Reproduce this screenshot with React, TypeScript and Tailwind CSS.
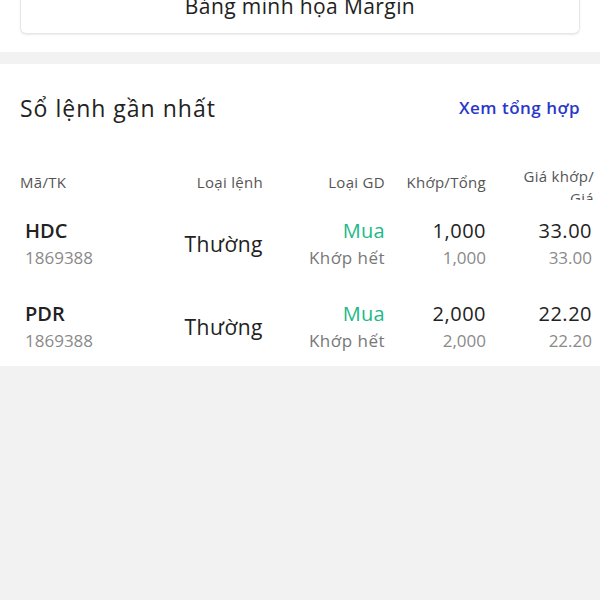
const orders = [
  { code: "HDC", account: "1869388", type: "Thường", side: "Mua", status: "Khớp hết", matched: "1,000", total: "1,000", price: "33.00", orderPrice: "33.00" },
  { code: "PDR", account: "1869388", type: "Thường", side: "Mua", status: "Khớp hết", matched: "2,000", total: "2,000", price: "22.20", orderPrice: "22.20" },
];

export default function App() {
  return (
    <div className="w-[600px] h-[600px] overflow-hidden bg-[#f2f2f2] flex flex-col font-['Open_Sans',sans-serif] text-[#222]">
      {/* margin illustration button, cut at top */}
      <div className="h-[52px] bg-white">
        <div className="mx-[20px] h-[34px] overflow-hidden rounded-b-[6px] border border-t-0 border-[#e6e6e6] shadow-[0_1px_2px_rgba(0,0,0,0.08)] flex items-end justify-center pb-[16px]">
          <span className="text-[21px] leading-[21px] tracking-[0.4px] text-[#222]">Bảng minh họa Margin</span>
        </div>
      </div>

      <div className="h-[12px]" />

      <div className="bg-white pl-[20px] pr-[6px]">
        <div className="flex items-center justify-between pt-[16px] pr-[14px] h-[72px]">
          <h2 className="text-[23px] leading-[28px] tracking-[1px]">Sổ lệnh gần nhất</h2>
          <a className="text-[17px] leading-[24px] tracking-[0.5px] font-semibold text-[#2a38c9]">Xem tổng hợp</a>
        </div>

        <div className="h-[64px] pt-[29px]">
          <div className="h-[35px] overflow-hidden flex items-center text-[15px] tracking-[0.3px] text-[#555]">
            <div className="flex-1">Mã/TK</div>
            <div className="w-[110px] text-right">Loại lệnh</div>
            <div className="w-[122px] text-right">Loại GD</div>
            <div className="w-[101px] text-right">Khớp/Tổng</div>
            <div className="w-[108px] self-start flex justify-end">
              <div className="w-[78px] text-right leading-[22px]">Giá khớp/ Giá</div>
            </div>
          </div>
        </div>

        {orders.map((o) => (
          <div key={o.code} className="h-[83px] pt-[17px] flex items-start">
            <div className="flex-1 pl-[5px] flex flex-col">
              <span className="text-[20px] leading-[27px] font-semibold">{o.code}</span>
              <span className="text-[17px] leading-[27px] text-[#8a8a8a]">{o.account}</span>
            </div>
            <div className="w-[110px] h-[54px] flex items-center justify-end">
              <span className="text-[21px] leading-[27px] tracking-[0.5px]">{o.type}</span>
            </div>
            <div className="w-[122px] flex flex-col items-end">
              <span className="text-[20px] leading-[27px] tracking-[0.3px] text-[#22b887]">{o.side}</span>
              <span className="text-[17px] leading-[27px] tracking-[0.5px] text-[#777]">{o.status}</span>
            </div>
            <div className="w-[101px] flex flex-col items-end">
              <span className="text-[20px] leading-[27px] tracking-[0.5px]">{o.matched}</span>
              <span className="text-[17px] leading-[27px] text-[#8a8a8a]">{o.total}</span>
            </div>
            <div className="w-[108px] pr-[2px] flex flex-col items-end">
              <span className="text-[20px] leading-[27px] tracking-[0.5px]">{o.price}</span>
              <span className="text-[17px] leading-[27px] text-[#8a8a8a]">{o.orderPrice}</span>
            </div>
          </div>
        ))}
      </div>
    </div>
  );
}
